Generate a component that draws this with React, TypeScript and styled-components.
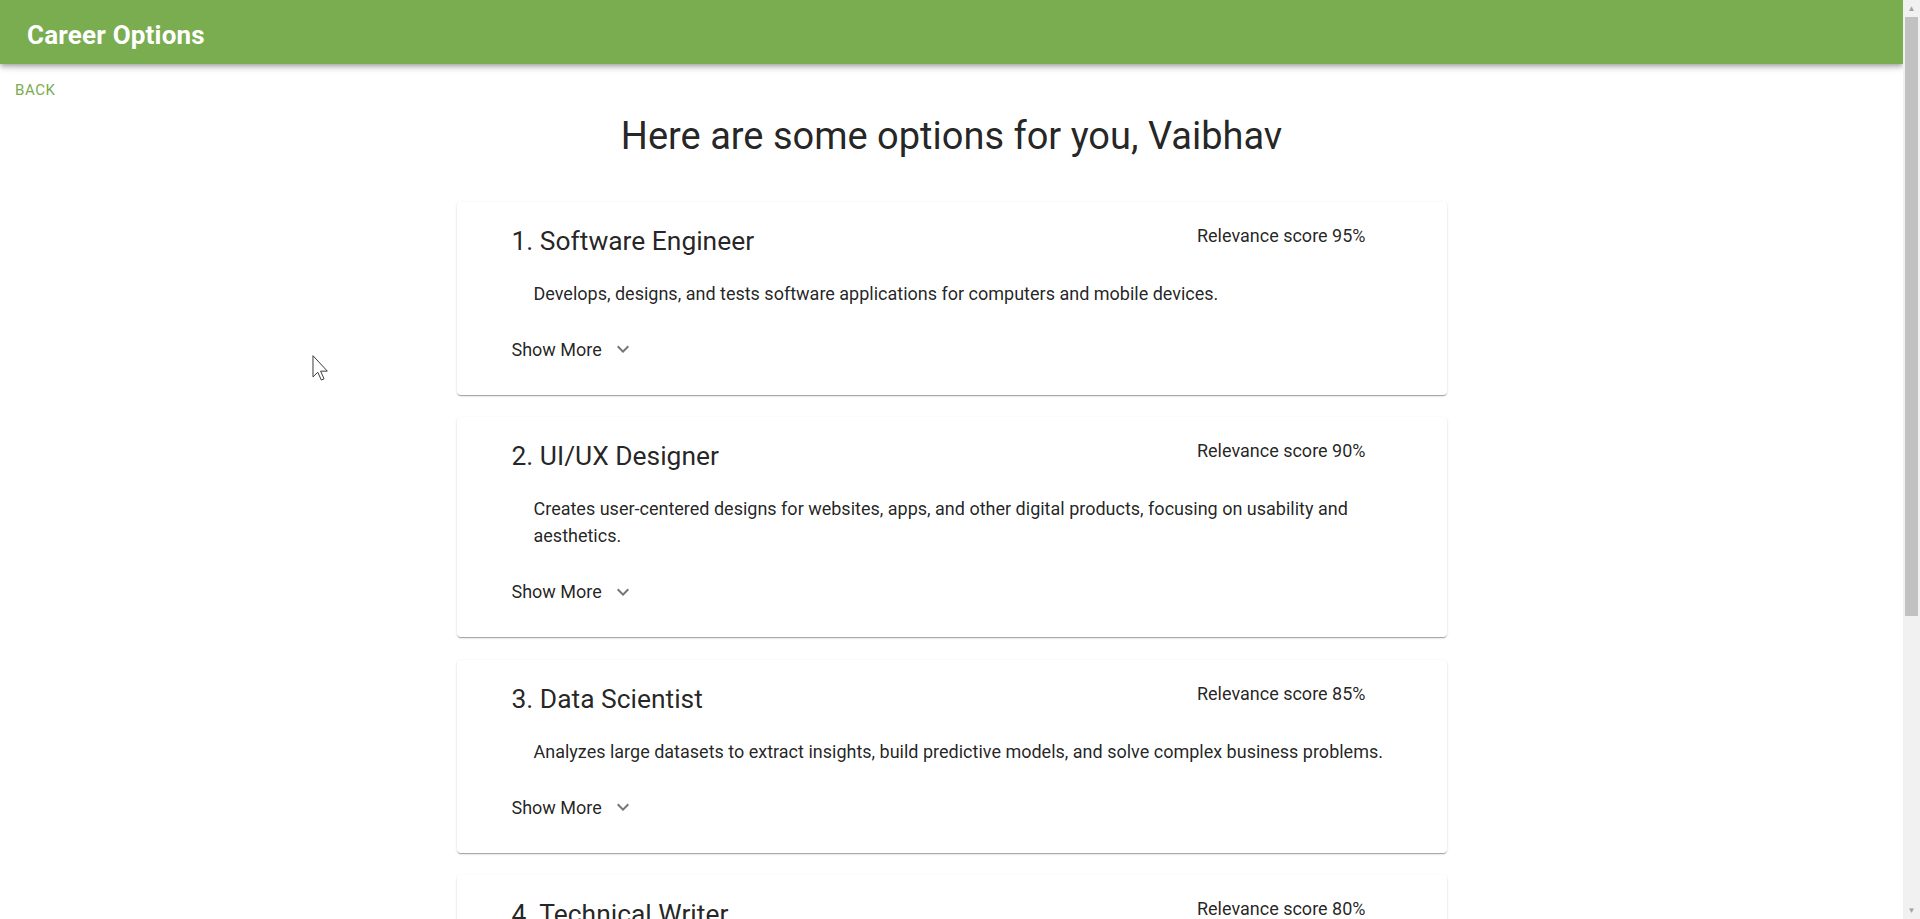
import React from "react"
import styled, { createGlobalStyle } from "styled-components"

// Data

type Career = {
  title: string
  score: number
  description: string
}

const careers: Career[] = [
  {
    title: "Software Engineer",
    score: 95,
    description:
      "Develops, designs, and tests software applications for computers and mobile devices.",
  },
  {
    title: "UI/UX Designer",
    score: 90,
    description:
      "Creates user-centered designs for websites, apps, and other digital products, focusing on usability and aesthetics.",
  },
  {
    title: "Data Scientist",
    score: 85,
    description:
      "Analyzes large datasets to extract insights, build predictive models, and solve complex business problems.",
  },
  {
    title: "Technical Writer",
    score: 80,
    description:
      "Creates clear and concise documentation, manuals, and guides for technical products and processes.",
  },
  {
    title: "Product Manager",
    score: 75,
    description:
      "Defines product vision and strategy, working with engineering and design teams to deliver features users love.",
  },
]

// Colours & sizes

const green = "#7aac50"
const textColor = "rgba(0, 0, 0, 0.87)"
const scrollbarWidth = 17

// Styled Components

const GlobalStyle = createGlobalStyle`
  body {
    margin: 0;
    padding-right: ${scrollbarWidth}px;
    background: #ffffff;
    font-family: Roboto, "Liberation Sans", Arial, sans-serif;
    color: ${textColor};
  }
`

const AppBar = styled.header`
  background-color: ${green};
  color: #ffffff;
  box-shadow: 0px 2px 4px -1px rgba(0, 0, 0, 0.2),
    0px 4px 5px 0px rgba(0, 0, 0, 0.14), 0px 1px 10px 0px rgba(0, 0, 0, 0.12);
  position: relative;
  z-index: 2;
`

const Toolbar = styled.div`
  height: 64px;
  display: flex;
  align-items: center;
  padding: 0 27px;
`

const AppTitle = styled.h1`
  margin: 7px 0 0;
  font-size: 26px;
  font-weight: 700;
  line-height: 1.6;
  letter-spacing: 0.0075em;
`

const BackRow = styled.div`
  padding: 8px 0 0 7px;
`

const BackButton = styled.button`
  background: none;
  border: none;
  cursor: pointer;
  padding: 0 8px;
  height: 36px;
  font-family: Roboto, "Liberation Sans", Arial, sans-serif;
  font-size: 15px;
  font-weight: 400;
  letter-spacing: 0.04em;
  text-transform: uppercase;
  color: ${green};
  border-radius: 4px;
`

const Main = styled.main`
  display: flex;
  flex-direction: column;
  align-items: center;
  padding-bottom: 60px;
`

const Heading = styled.h2`
  margin: 5px 0 42px;
  font-size: 38px;
  font-weight: 400;
  line-height: 1.235;
  text-align: center;
`

const CardList = styled.div`
  width: 990px;
  display: flex;
  flex-direction: column;
  gap: 22.5px;
`

const Card = styled.section`
  background: #ffffff;
  border-radius: 4px;
  box-shadow: 0px 2px 1px -1px rgba(0, 0, 0, 0.2),
    0px 1px 1px 0px rgba(0, 0, 0, 0.14), 0px 1px 3px 0px rgba(0, 0, 0, 0.12);
  padding: 22px 53px 32px 55px;
`

const CardHeader = styled.div`
  display: flex;
  justify-content: space-between;
  align-items: flex-start;
`

const CardTitle = styled.h3`
  margin: 0;
  font-size: 26.4px;
  font-weight: 400;
  line-height: 34px;
`

const Score = styled.span`
  margin-top: -2px;
  margin-right: 28px;
  font-size: 18px;
  line-height: 1.5;
`

const Description = styled.p`
  margin: 22px 0 0 22px;
  font-size: 18px;
  line-height: 1.5;
`

const ShowMore = styled.button`
  margin-top: 29px;
  padding: 0;
  background: none;
  border: none;
  cursor: pointer;
  display: flex;
  align-items: center;
  gap: 9px;
  font-family: Roboto, "Liberation Sans", Arial, sans-serif;
  font-size: 18px;
  line-height: 1.5;
  color: ${textColor};
`

const ChevronIcon = styled.svg`
  width: 24px;
  height: 24px;
  fill: rgba(0, 0, 0, 0.54);
`

// Browser chrome drawn over the page: the scroll bar and the mouse pointer

const ScrollTrack = styled.div`
  position: fixed;
  top: 0;
  right: 0;
  bottom: 0;
  width: ${scrollbarWidth}px;
  background: #f1f1f1;
  display: flex;
  flex-direction: column;
  z-index: 10;
`

const ScrollArrow = styled.div`
  height: 17px;
  display: flex;
  align-items: center;
  justify-content: center;
  color: #a3a3a3;
  font-size: 8px;
`

const ScrollThumb = styled.div<{ $length: number }>`
  height: ${(props) => props.$length}px;
  margin: 0 2px;
  background: #c1c1c1;
`

const ScrollSpacer = styled.div`
  flex: 1;
`

const Cursor = styled.svg`
  position: absolute;
  left: 312px;
  top: 355px;
  width: 17px;
  height: 26px;
  z-index: 5;
  pointer-events: none;
`

// Components

function ExpandMore() {
  return (
    <ChevronIcon viewBox="0 0 24 24" aria-hidden="true">
      <path d="M16.59 8.59 12 13.17 7.41 8.59 6 10l6 6 6-6z" />
    </ChevronIcon>
  )
}

function CareerCard({ career, index }: { career: Career; index: number }) {
  return (
    <Card>
      <CardHeader>
        <CardTitle>
          {index + 1}. {career.title}
        </CardTitle>
        <Score>Relevance score {career.score}%</Score>
      </CardHeader>
      <Description>{career.description}</Description>
      <ShowMore>
        Show More
        <ExpandMore />
      </ShowMore>
    </Card>
  )
}

function Scrollbar() {
  return (
    <ScrollTrack aria-hidden="true">
      <ScrollArrow>▲</ScrollArrow>
      <ScrollThumb $length={599} />
      <ScrollSpacer />
      <ScrollArrow>▼</ScrollArrow>
    </ScrollTrack>
  )
}

export default function App() {
  return (
    <>
      <GlobalStyle />
      <AppBar>
        <Toolbar>
          <AppTitle>Career Options</AppTitle>
        </Toolbar>
      </AppBar>
      <BackRow>
        <BackButton>Back</BackButton>
      </BackRow>
      <Main>
        <Heading>Here are some options for you, Vaibhav</Heading>
        <CardList>
          {careers.map((career, index) => (
            <CareerCard key={career.title} career={career} index={index} />
          ))}
        </CardList>
      </Main>
      <Scrollbar />
      <Cursor viewBox="0 0 12 19" aria-hidden="true">
        <path
          d="M0.5 0.5 L0.5 16 L4 12.6 L6.6 18.3 L8.6 17.4 L6.1 11.8 L11 11.8 Z"
          fill="#ffffff"
          stroke="#333333"
          strokeWidth="0.7"
          strokeLinejoin="round"
        />
      </Cursor>
    </>
  )
}
